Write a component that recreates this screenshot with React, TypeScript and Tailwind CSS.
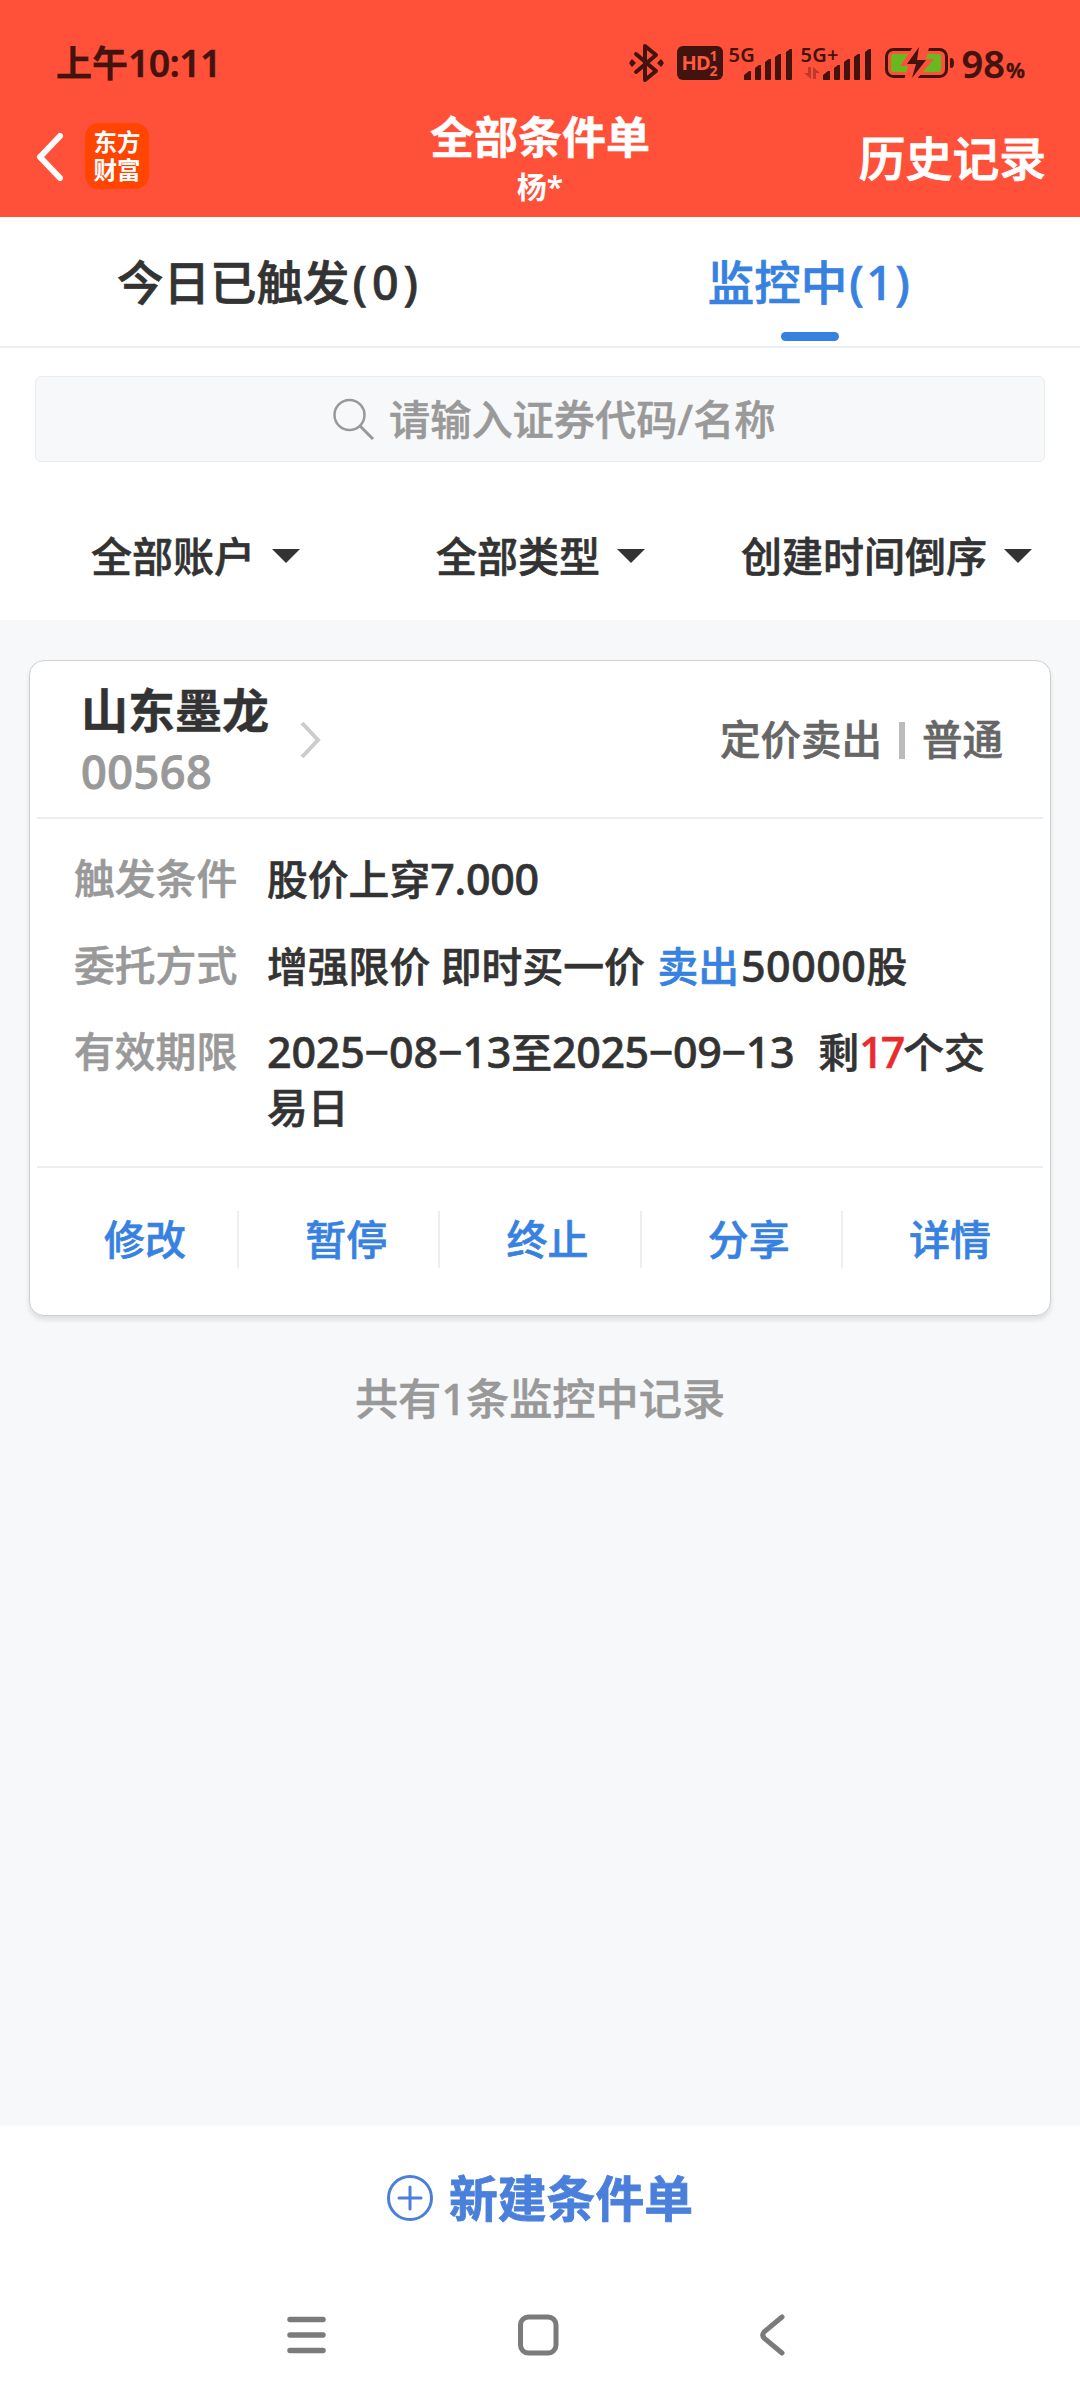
import type { ReactNode } from "react";

interface RowProps {
  label: string;
  children: ReactNode;
}

const actions = ["修改", "暂停", "终止", "分享", "详情"];

const SignalBars = () => (
  <svg width="48" height="31" viewBox="0 0 48 31" fill="#43130d">
    <path d="M0 30v-4l5-4h2v8.500q0 .5-.5.500h-6q-.5 0-.5-1z" />
    <path d="M11 30v-11l4-3h2v14q0 1-1 1h-4q-1 0-1-1z" />
    <path d="M21 30v-17l4-3h2v20q0 1-1 1h-4q-1 0-1-1z" />
    <path d="M31 30v-22l4-3h2v25q0 1-1 1h-4q-1 0-1-1z" />
    <path d="M42 30v-27l4-3h2v30q0 1-1 1h-4q-1 0-1-1z" />
  </svg>
);

const StatusBar = () => (
  <div className="flex h-[108px] items-start text-[#43130d]">
    <div className="ml-[56px] mt-[42px] h-[42px] text-[36px] leading-[42px] font-semibold whitespace-nowrap [-webkit-text-stroke:0.4px]">
      上午<span className="text-[37.500px] tracking-[-0.700px]">10:11</span>
    </div>
    <div className="ml-auto mr-[55px] flex items-start">
      <svg className="mt-[43px]" width="37" height="40" viewBox="0 0 37 40" fill="none" stroke="#43130d" strokeWidth="4" strokeLinejoin="round" strokeLinecap="round">
        <path d="M8 11l20 17-11 9V3l11 9L8 29" />
        <path d="M4 17l3 3-3 3-2-3zM33 17l2 3-2 3-3-3z" fill="#43130d" strokeWidth="1.500" />
      </svg>
      <div className="mt-[46px] ml-[12px] flex h-[34px] w-[46px] items-center justify-center rounded-[6px] bg-[#43130d] text-[#ff5a42]">
        <span className="text-[20px] leading-[34px] font-bold tracking-[-1px]">HD</span>
        <span className="flex flex-col text-[14px] leading-[15px] font-bold">
          <span>1</span>
          <span>2</span>
        </span>
      </div>
      <div className="relative mt-[49px] ml-[21px] h-[31px]">
        <span className="absolute -left-[15px] -top-[5px] text-[20px] leading-[22px] font-semibold tracking-[0.300px]">5G</span>
        <SignalBars />
      </div>
      <div className="relative mt-[49px] ml-[31px] h-[31px]">
        <span className="absolute -left-[22px] -top-[5px] text-[20px] leading-[22px] font-semibold tracking-[0.300px]">5G+</span>
        <svg className="absolute -left-[19px] top-[18px]" width="16" height="12" viewBox="0 0 16 12" fill="#bd3a2a">
          <path d="M4 0h3v12L0 6h4zM9 0l7 6h-4v6H9z" />
        </svg>
        <SignalBars />
      </div>
      <svg className="mt-[47px] ml-[14px]" width="70" height="32" viewBox="0 0 70 32">
        <rect x="1.500" y="2.500" width="60" height="27" rx="7" fill="none" stroke="#43130d" strokeWidth="3" />
        <rect x="6" y="7" width="50" height="18" rx="2" fill="#68b91d" />
        <path d="M30 -3L15 19h8l-4 14h12L49 12h-8l4-15z" fill="#ff513a" />
        <path d="M34 0L22 17h9l-4 14 14-18h-9z" fill="#43130d" />
        <path d="M66 11h1q2 1 2 5t-2 5h-1q-1 0-1-2v-6q0-2 1-2z" fill="#43130d" />
      </svg>
      <div className="mt-[42px] ml-[7px] text-[38px] leading-[42px] font-semibold whitespace-nowrap [-webkit-text-stroke:0.3px]">
        98<span className="ml-px text-[21px] font-bold">%</span>
      </div>
    </div>
  </div>
);

const Header = () => (
  <header className="h-[217px] bg-[#ff513a]">
    <StatusBar />
    <div className="grid grid-cols-3 text-white">
      <div className="flex">
        <svg className="mt-[24px] ml-[35px]" width="30" height="50" viewBox="0 0 30 50" fill="none" stroke="white" strokeWidth="6" strokeLinecap="round" strokeLinejoin="round">
          <path d="M25 4L5 25l20 21" />
        </svg>
        <div className="mt-[15px] ml-[20px] h-[66px] w-[64px] rounded-[14px] bg-[#ff4500] pt-[5px] text-center text-[23.500px] leading-[28px] font-bold">
          <div>东方</div>
          <div>财富</div>
        </div>
      </div>
      <div className="flex flex-col items-center whitespace-nowrap">
        <h1 className="mt-px text-[44px] leading-[56px] font-bold [-webkit-text-stroke:0.5px]">全部条件单</h1>
        <p className="mt-px text-[30px] leading-[42px] font-semibold">杨*</p>
      </div>
      <div className="mt-[20px] mr-[34px] text-right text-[46.800px] leading-[60px] font-medium [-webkit-text-stroke:0.9px]">历史记录</div>
    </div>
  </header>
);

const Tabs = () => (
  <div className="grid h-[131px] grid-cols-2 border-b-2 border-[#eeeeee] text-center text-[46.500px] leading-[60px] font-medium [-webkit-text-stroke:0.7px]">
    <div className="pt-[35px] text-[#333333]">
      今日已触发<span className="ml-[3px] tracking-[5px]">(0)</span>
    </div>
    <div className="flex flex-col items-center pt-[35px] text-[#3781e0]">
      <span>
        监控中<span className="ml-[2px] tracking-[2.500px]">(1)</span>
      </span>
      <span className="mt-[20px] h-[9px] w-[58px] rounded-full bg-[#3781e0]" />
    </div>
  </div>
);

const SearchBox = () => (
  <div className="mx-[35px] mt-[28px] flex h-[86px] items-center rounded-[6px] border border-[#ebecee] bg-[#f7f8fa] text-[#999999]">
    <svg className="mb-[3px] ml-[296px]" width="44" height="44" viewBox="0 0 44 44" fill="none" stroke="#999999" strokeWidth="2.500">
      <circle cx="17.500" cy="19" r="15" />
      <path d="M28 30l13 13" strokeWidth="3" />
    </svg>
    <span className="ml-[13px] text-[41.200px] leading-[56px] font-medium [-webkit-text-stroke:0.5px]">请输入证券代码/名称</span>
  </div>
);

const Filter = ({ text }: { text: string }) => (
  <div className="flex items-center">
    <span className="text-[41px] leading-[56px] font-medium [-webkit-text-stroke:0.6px]">{text}</span>
    <svg className="ml-[17px]" width="28" height="14" viewBox="0 0 28 14" fill="#333333">
      <path d="M0 0h28L14 14z" />
    </svg>
  </div>
);

const Row = ({ label, children }: RowProps) => (
  <div className="flex text-[40.800px] leading-[55px] font-medium [-webkit-text-stroke:0.6px]">
    <span className="w-[193px] shrink-0 text-[#999999]">{label}</span>
    <div className="text-[#333333]">{children}</div>
  </div>
);

const OrderCard = () => (
  <section className="mx-[29px] mt-[39px] h-[656px] rounded-[15px] border border-[#cfd0d2] bg-white px-[7px] shadow-[0_4px_5px_rgba(0,0,0,0.10)]">
    <div className="flex h-[158px] border-b-2 border-[#eeeeee] pl-[44px]">
      <div>
        <div className="mt-[19px] text-[47px] leading-[60px] font-bold text-[#333333] [-webkit-text-stroke:0.5px]">山东墨龙</div>
        <div className="mt-[2px] text-[45px] leading-[60px] font-medium tracking-[0.500px] text-[#999999] [-webkit-text-stroke:1px]">00568</div>
      </div>
      <svg className="mt-[60px] ml-[31px]" width="22" height="38" viewBox="0 0 22 38" fill="none" stroke="#cccccc" strokeWidth="4">
        <path d="M2 2l16 17L2 36" />
      </svg>
      <div className="mt-[51px] mr-[40px] ml-auto flex h-[56px] items-center text-[40.500px] leading-[56px] font-medium text-[#666666] [-webkit-text-stroke:0.6px]">
        定价卖出
        <span className="mr-[17px] ml-[17px] h-[37px] w-[6px] bg-[#bbbbbb]" />
        普通
      </div>
    </div>
    <div className="flex h-[349px] flex-col gap-[30.500px] border-b-2 border-[#eeeeee] pt-[32px] pl-[37px]">
      <Row label="触发条件">
        股价上穿<span className="text-[43px] tracking-[-0.300px]">7.000</span>
      </Row>
      <Row label="委托方式">
        增强限价 即时买一价 <span className="ml-[2px] text-[#3781e0]">卖出</span>
        <span className="ml-[2px] text-[43px] tracking-[0.500px]">50000</span>股
      </Row>
      <Row label="有效期限">
        <span className="text-[43px] tracking-[-0.200px]">2025−08−13</span>至
        <span className="text-[43px] tracking-[-0.400px]">2025−09−13</span>
        <span className="ml-[24px]">剩</span>
        <span className="text-[43px] tracking-[-3px] text-[#e92b2b]">17</span>
        <span className="ml-px">个交</span>
        <br />
        易日
      </Row>
    </div>
    <div className="mt-[43px] grid grid-cols-5 text-center text-[41px] leading-[57px] font-medium text-[#3781e0] [-webkit-text-stroke:0.6px]">
      {actions.map((action) => (
        <div key={action} className="relative left-px border-r-2 border-[#eeeeee] pl-[15px] last:border-transparent">
          {action}
        </div>
      ))}
    </div>
  </section>
);

const SystemNav = () => (
  <div className="flex items-center pl-[286px]">
    <svg width="40" height="42" viewBox="0 0 40 42" stroke="#7b7b7b" strokeWidth="5.500" strokeLinecap="round">
      <path d="M4 5.500h33M4 21h33M4 36.500h33" />
    </svg>
    <svg className="ml-[191px]" width="42" height="42" viewBox="0 0 42 42" fill="none" stroke="#7b7b7b" strokeWidth="5">
      <rect x="3.500" y="3" width="35.500" height="36" rx="8" />
    </svg>
    <svg className="ml-[198px]" width="30" height="42" viewBox="0 0 30 42" fill="none" stroke="#7b7b7b" strokeWidth="5" strokeLinecap="round">
      <path d="M25 3L7.500 17.500Q4 21 7.500 24.500L25 39" />
    </svg>
  </div>
);

const App = () => {
  return (
    <div className="flex h-[2400px] w-[1080px] flex-col overflow-hidden bg-white font-['Noto_Sans','Noto_Sans_CJK_SC',sans-serif]">
      <Header />
      <Tabs />
      <SearchBox />
      <div className="flex h-[158px] items-center pt-[30px] pl-[91px] text-[#333333]">
        <Filter text="全部账户" />
        <div className="ml-[136px]">
          <Filter text="全部类型" />
        </div>
        <div className="ml-[96px]">
          <Filter text="创建时间倒序" />
        </div>
      </div>
      <main className="h-[1506px] bg-[#f7f8fa] pt-px">
        <OrderCard />
        <p className="mt-[53px] text-center text-[43.200px] leading-[60px] font-medium text-[#999999] [-webkit-text-stroke:0.5px]">共有1条监控中记录</p>
      </main>
      <footer>
        <div className="mt-[42px] flex h-[60px] items-center pl-[386px] text-[#4a7fdc]">
          <svg width="48" height="48" viewBox="0 0 48 48" fill="none" stroke="#4a7fdc" strokeWidth="3">
            <circle cx="24" cy="24" r="21.500" />
            <path d="M13 24h22M24 13v22" strokeLinecap="round" />
          </svg>
          <span className="ml-[15px] text-[48.800px] leading-[60px] font-bold [-webkit-text-stroke:0.8px]">新建条件单</span>
        </div>
        <div className="mt-[86px]">
          <SystemNav />
        </div>
      </footer>
    </div>
  );
};

export default App;
